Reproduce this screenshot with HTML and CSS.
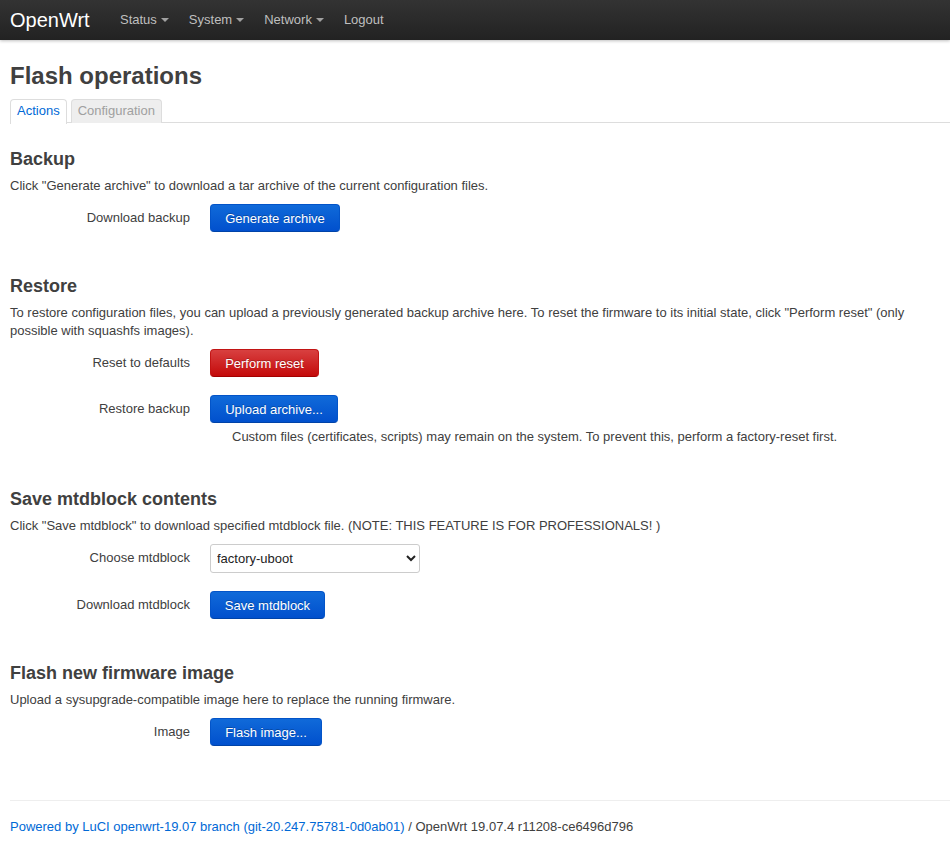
FILE: index.html
```html
<!DOCTYPE html>
<html>
<head>
<meta charset="utf-8">
<title>Flash operations</title>
<link rel="stylesheet" href="styles.css">
</head>
<body>
<header class="topbar">
  <a class="brand" href="#">OpenWrt</a>
  <nav class="nav">
    <a class="nav-item" href="#">Status <span class="caret"></span></a>
    <a class="nav-item" href="#">System <span class="caret"></span></a>
    <a class="nav-item" href="#">Network <span class="caret"></span></a>
    <a class="nav-item" href="#">Logout</a>
  </nav>
</header>
<main class="container">
  <h2 class="page-title">Flash operations</h2>
  <ul class="tabs">
    <li class="tab active">Actions</li>
    <li class="tab">Configuration</li>
  </ul>

  <section class="section">
    <h3 class="section-title">Backup</h3>
    <p class="descr">Click "Generate archive" to download a tar archive of the current configuration files.</p>
    <div class="row">
      <label class="row-label">Download backup</label>
      <div class="row-field"><button class="btn primary w130">Generate archive</button></div>
    </div>
  </section>

  <section class="section">
    <h3 class="section-title">Restore</h3>
    <p class="descr">To restore configuration files, you can upload a previously generated backup archive here. To reset the firmware to its initial state, click "Perform reset" (only possible with squashfs images).</p>
    <div class="row">
      <label class="row-label">Reset to defaults</label>
      <div class="row-field"><button class="btn danger w109">Perform reset</button></div>
    </div>
    <div class="row">
      <label class="row-label">Restore backup</label>
      <div class="row-field">
        <button class="btn primary w128">Upload archive...</button>
        <div class="help">Custom files (certificates, scripts) may remain on the system. To prevent this, perform a factory-reset first.</div>
      </div>
    </div>
  </section>

  <section class="section">
    <h3 class="section-title">Save mtdblock contents</h3>
    <p class="descr">Click "Save mtdblock" to download specified mtdblock file. (NOTE: THIS FEATURE IS FOR PROFESSIONALS! )</p>
    <div class="row row-select">
      <label class="row-label">Choose mtdblock</label>
      <div class="row-field">
        <select class="select"><option>factory-uboot</option></select>
      </div>
    </div>
    <div class="row">
      <label class="row-label">Download mtdblock</label>
      <div class="row-field"><button class="btn primary w115">Save mtdblock</button></div>
    </div>
  </section>

  <section class="section">
    <h3 class="section-title">Flash new firmware image</h3>
    <p class="descr">Upload a sysupgrade-compatible image here to replace the running firmware.</p>
    <div class="row">
      <label class="row-label">Image</label>
      <div class="row-field"><button class="btn primary w112">Flash image...</button></div>
    </div>
  </section>

  <footer class="footer">
    <a href="#" class="footer-link">Powered by LuCI openwrt-19.07 branch (git-20.247.75781-0d0ab01)</a> / OpenWrt 19.07.4 r11208-ce6496d796
  </footer>
</main>
</body>
</html>
```
FILE: styles.css
```css
* { box-sizing: border-box; }
html, body { margin: 0; padding: 0; background: #fff; }
body {
  font-family: "Liberation Sans", Arial, Helvetica, sans-serif;
  font-size: 13px;
  line-height: 18px;
  color: #404040;
}
a { text-decoration: none; }

.topbar {
  height: 40px;
  display: flex;
  align-items: center;
  background: linear-gradient(to bottom, #333333, #222222);
  box-shadow: 0 1px 3px rgba(0,0,0,0.25);
  padding-left: 10px;
}
.brand {
  color: #ffffff;
  font-size: 20px;
  line-height: 40px;
  width: 100px;
}
.nav { display: flex; }
.nav-item {
  color: #bfbfbf;
  font-size: 13px;
  line-height: 40px;
  padding: 0 10px;
  display: flex;
  align-items: center;
}
.caret {
  display: inline-block;
  margin-left: 4px;
  width: 0; height: 0;
  border-left: 4px solid transparent;
  border-right: 4px solid transparent;
  border-top: 4px solid #bfbfbf;
  opacity: 0.8;
}

.container { padding: 0 10px 0 10px; }
.page-title {
  margin: 18px 0 5px;
  font-size: 24px;
  line-height: 36px;
  font-weight: bold;
  color: #404040;
}
.tabs {
  list-style: none;
  margin: 0 -10px 0 0;
  padding: 0;
  display: flex;
  gap: 4px;
  border-bottom: 1px solid #ddd;
  height: 24px;
}
.tab {
  height: 24px;
  padding: 0 6px;
  line-height: 22px;
  border: 1px solid #ddd;
  border-bottom: none;
  border-radius: 4px 4px 0 0;
  background: #eeeeee;
  color: #a0a0a0;
}
.tab.active {
  background: #fff;
  color: #0069d6;
  height: 25px;
  border-color: #ddd;
}

.section { padding-top: 23px; }
.section-title {
  margin: 0;
  font-size: 18px;
  line-height: 26px;
  font-weight: bold;
}
.descr {
  margin: 5px 0 9px;
  font-size: 13px;
  line-height: 18px;
}
.row {
  display: flex;
  align-items: flex-start;
  gap: 20px;
  margin-bottom: 18px;
}
.row-select { margin-top: 3px; }
.row-label {
  width: 180px;
  flex: none;
  text-align: right;
  font-size: 13px;
  line-height: 28px;
}
.row-field { font-size: 13px; }
.btn {
  height: 28px;
  border-radius: 4px;
  font-family: inherit;
  font-size: 13px;
  color: #fff;
  padding: 0 10px;
  cursor: pointer;
  text-shadow: 0 -1px 0 rgba(0,0,0,0.25);
}
.primary {
  background: linear-gradient(to bottom, #106ad9, #0150cd);
  border: 1px solid #0354c8;
  border-bottom-color: #0043a8;
}
.danger {
  background: linear-gradient(to bottom, #d84040, #c40a0a);
  border: 1px solid #c21414;
  border-bottom-color: #a30000;
}
.w130 { width: 130px; }
.w109 { width: 109px; }
.w128 { width: 128px; }
.w115 { width: 115px; }
.w112 { width: 112px; }
.help {
  margin-top: 5px;
  padding-left: 22px;
  line-height: 17px;
}
.select {
  width: 210px;
  height: 29px;
  font-family: inherit;
  font-size: 13px;
  color: #222;
  border: 1px solid #ccc;
  border-radius: 3px;
  background: #fff;
  padding: 0 2px;
}
.footer {
  margin: 54px -10px 0 0;
  border-top: 1px solid #eee;
  padding-top: 17px;
  font-size: 13px;
  line-height: 18px;
}
.footer-link { color: #0069d6; }
```
